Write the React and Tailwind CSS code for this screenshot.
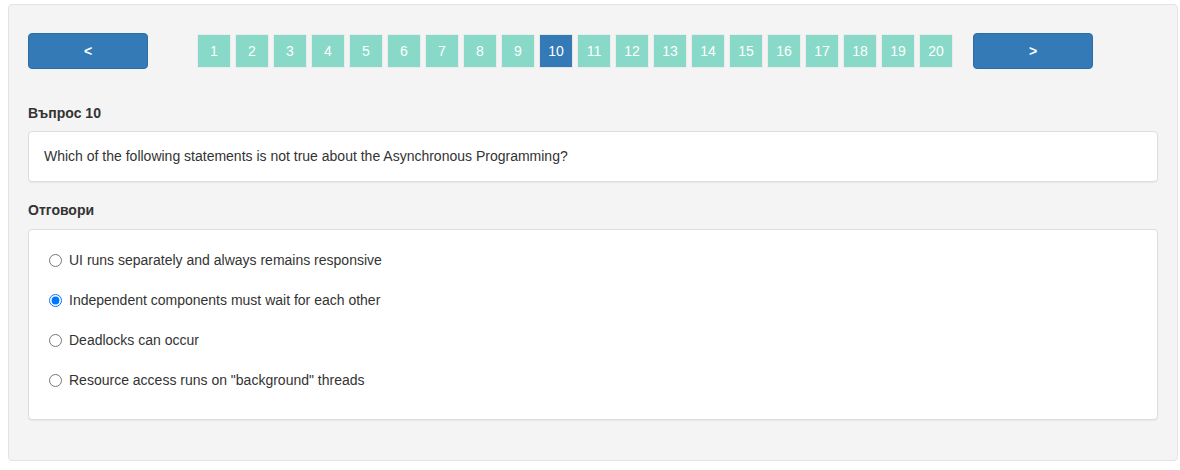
import React from "react";

const answers = [
  { text: "UI runs separately and always remains responsive", checked: false },
  { text: "Independent components must wait for each other", checked: true },
  { text: "Deadlocks can occur", checked: false },
  { text: 'Resource access runs on "background" threads', checked: false },
];

export default function App() {
  const pages = Array.from({ length: 20 }, (_, i) => i + 1);
  return (
    <div className="bg-white w-[1180px] h-[470px] pt-[4px] pl-[8px]" style={{ fontFamily: '"Liberation Sans", Arial, sans-serif' }}>
      <div className="w-[1170px] h-[457px] border border-[#e3e3e3] rounded-[4px] bg-[#f4f4f4] px-[19px] pt-[28px] text-[#333] text-[14px]">
        <div className="flex items-center h-[36px]">
          <button className="w-[120px] h-[36px] rounded-[4px] bg-[#337ab7] border border-[#2e6da4] text-white font-bold text-[14px] flex items-center justify-center">
            &lt;
          </button>
          <div className="ml-[49px] flex gap-[4px]">
            {pages.map((p) => (
              <div
                key={p}
                className={
                  p === 10
                    ? "w-[34px] h-[34px] flex items-center justify-center text-white text-[14px] border border-[#e6e6e6] bg-[#337ab7]"
                    : "w-[34px] h-[34px] flex items-center justify-center text-white text-[14px] border border-[#ececec] bg-[#88d9c8]"
                }
              >
                {p}
              </div>
            ))}
          </div>
          <button className="ml-[20px] w-[120px] h-[36px] rounded-[4px] bg-[#337ab7] border border-[#2e6da4] text-white font-bold text-[14px] flex items-center justify-center">
            &gt;
          </button>
        </div>

        <div className="mt-[34px] mb-[8px] font-bold leading-[20px]">Въпрос 10</div>
        <div className="h-[51px] bg-white border border-[#dddddd] rounded-[4px] shadow-[0_1px_1px_rgba(0,0,0,0.05)] px-[15px] flex items-center">
          Which of the following statements is not true about the Asynchronous Programming?
        </div>

        <div className="mt-[18px] mb-[9px] font-bold leading-[20px]">Отговори</div>
        <div className="h-[191px] bg-white border border-[#dddddd] rounded-[4px] shadow-[0_1px_1px_rgba(0,0,0,0.05)] pt-[10px] pl-[20px]">
          {answers.map((a, i) => (
            <label key={i} className="h-[40px] flex items-center">
              <input
                type="radio"
                name="answer"
                defaultChecked={a.checked}
                className="m-0 w-[13px] h-[13px]"
              />
              <span className="ml-[7px]">{a.text}</span>
            </label>
          ))}
        </div>
      </div>
    </div>
  );
}
